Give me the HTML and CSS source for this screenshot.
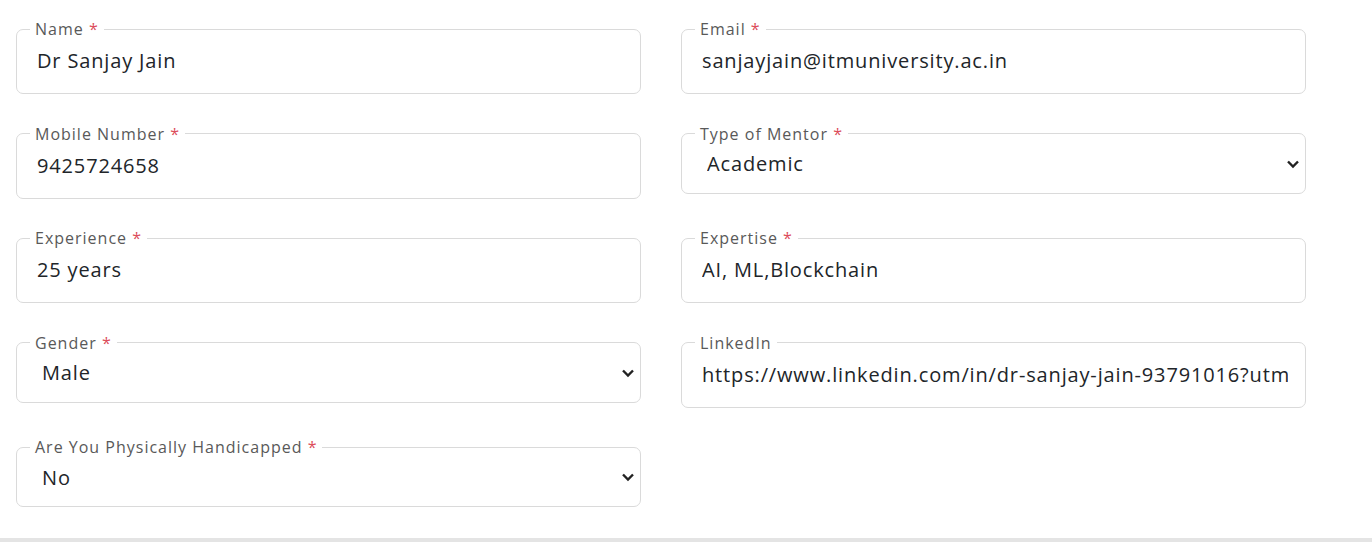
FILE: index.html
```html
<!DOCTYPE html>
<html lang="en">
<head>
<meta charset="utf-8">
<title>Mentor Details</title>
<link rel="stylesheet" href="styles.css">
</head>
<body>
<div class="page">
  <form class="form-grid">
    <fieldset class="field">
      <legend>Name <span class="req">*</span></legend>
      <input class="control" type="text" value="Dr Sanjay Jain">
    </fieldset>
    <fieldset class="field">
      <legend>Email <span class="req">*</span></legend>
      <input class="control" type="text" value="sanjayjain@itmuniversity.ac.in">
    </fieldset>
    <fieldset class="field">
      <legend>Mobile Number <span class="req">*</span></legend>
      <input class="control" type="text" value="9425724658">
    </fieldset>
    <fieldset class="field field-select">
      <legend>Type of Mentor <span class="req">*</span></legend>
      <select class="select"><option>Academic</option><option>Industry</option></select>
    </fieldset>
    <fieldset class="field">
      <legend>Experience <span class="req">*</span></legend>
      <input class="control" type="text" value="25 years">
    </fieldset>
    <fieldset class="field">
      <legend>Expertise <span class="req">*</span></legend>
      <input class="control" type="text" value="AI, ML,Blockchain">
    </fieldset>
    <fieldset class="field field-select">
      <legend>Gender <span class="req">*</span></legend>
      <select class="select"><option>Male</option><option>Female</option><option>Other</option></select>
    </fieldset>
    <fieldset class="field">
      <legend>LinkedIn</legend>
      <input class="control" type="text" value="https://www.linkedin.com/in/dr-sanjay-jain-93791016?utm_source=share&amp;utm_campaign=share_via">
    </fieldset>
    <fieldset class="field field-select">
      <legend>Are You Physically Handicapped <span class="req">*</span></legend>
      <select class="select"><option>No</option><option>Yes</option></select>
    </fieldset>
  </form>
  <div class="divider"></div>
</div>
</body>
</html>
```
FILE: styles.css
```css
html, body {
  margin: 0;
  padding: 0;
  background: #ffffff;
}

.page {
  font-family: "Open Sans", "Liberation Sans", sans-serif;
  width: 1372px;
  height: 542px;
  display: flex;
  flex-direction: column;
  justify-content: space-between;
}

.form-grid {
  display: grid;
  grid-template-columns: 625px 625px;
  column-gap: 40px;
  row-gap: 30.6px;
  align-items: start;
  padding: 20px 0 0 16px;
}

.field {
  margin: 0;
  min-width: 0;
  border: 1px solid #dadada;
  border-radius: 7px;
  padding: 0 17px 9px 13px;
}

.field-select {
  padding: 0 3px 8px 13px;
}

.field legend {
  padding: 0 5px;
  font-size: 16px;
  line-height: 18px;
  letter-spacing: 1px;
  color: #595959;
}

.req {
  color: #dc4c5a;
}

.control {
  display: block;
  width: 100%;
  box-sizing: border-box;
  height: 45px;
  border: 0;
  outline: none;
  padding: 0 0 0 7px;
  margin: 0 0 1px;
  background: transparent;
  font-family: "Open Sans", "Liberation Sans", sans-serif;
  font-size: 20px;
  letter-spacing: 0.85px;
  color: #212529;
}

.select {
  display: block;
  width: 100%;
  box-sizing: border-box;
  height: 42px;
  border: 0;
  outline: none;
  margin: 0;
  padding: 0 30px 0 12px;
  -webkit-appearance: none;
  appearance: none;
  background: transparent url("data:image/svg+xml,%3Csvg xmlns='http://www.w3.org/2000/svg' width='14' height='10' viewBox='0 0 14 10'%3E%3Cpath d='M2 2.5 L7 7.5 L12 2.5' fill='none' stroke='%23222' stroke-width='2.4'/%3E%3C/svg%3E") no-repeat right 2px center;
  background-size: 14px 10px;
  font-family: "Open Sans", "Liberation Sans", sans-serif;
  font-size: 20px;
  letter-spacing: 0.85px;
  color: #212529;
}

.divider {
  height: 4px;
  background: #e4e4e4;
}
```
